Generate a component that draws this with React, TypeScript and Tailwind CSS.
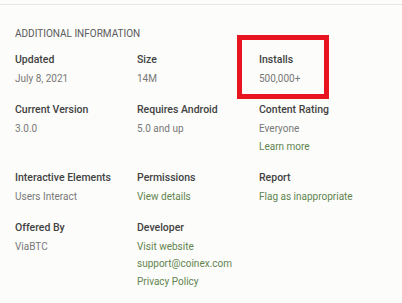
import React from "react";

type Item = { label: string; values: { text: string; link?: boolean }[]; boxed?: boolean };

const items: Item[] = [
  { label: "Updated", values: [{ text: "July 8, 2021" }] },
  { label: "Size", values: [{ text: "14M" }] },
  { label: "Installs", values: [{ text: "500,000+" }], boxed: true },
  { label: "Current Version", values: [{ text: "3.0.0" }] },
  { label: "Requires Android", values: [{ text: "5.0 and up" }] },
  { label: "Content Rating", values: [{ text: "Everyone" }, { text: "Learn more", link: true }] },
  { label: "Interactive Elements", values: [{ text: "Users Interact" }] },
  { label: "Permissions", values: [{ text: "View details", link: true }] },
  { label: "Report", values: [{ text: "Flag as inappropriate", link: true }] },
  { label: "Offered By", values: [{ text: "ViaBTC" }] },
  {
    label: "Developer",
    values: [
      { text: "Visit website", link: true },
      { text: "support@coinex.com", link: true },
      { text: "Privacy Policy", link: true },
    ],
  },
];

export default function App() {
  return (
    <div
      className="w-[402px] h-[303px] bg-[#fcfcfa] overflow-hidden"
      style={{ fontFamily: "Roboto, 'Liberation Sans', sans-serif" }}
    >
      <div className="pt-[4px]">
        <div className="h-px bg-[#e6e6e4]" />
      </div>
      <div className="pl-[15px] pt-[21px]">
        <div className="text-[10px] leading-[16px] text-[#5a5a5a]">ADDITIONAL INFORMATION</div>
        <div className="grid grid-cols-[122px_122px_122px] gap-y-[11.5px] mt-[7px]">
          {items.map((it) => (
            <div key={it.label} className="relative">
              {it.boxed && (
                <div className="absolute left-[-22px] top-[-14px] w-[92px] h-[64px] border-[5px] border-[#e8141f]" />
              )}
              <div className="text-[10.5px] leading-[21px] font-medium text-[#424242]">{it.label}</div>
              {it.values.map((v) => (
                <div
                  key={v.text}
                  className={`text-[10px] leading-[17.5px] ${v.link ? "text-[#62844f]" : "text-[#787878]"}`}
                >
                  {v.text}
                </div>
              ))}
            </div>
          ))}
        </div>
      </div>
    </div>
  );
}
